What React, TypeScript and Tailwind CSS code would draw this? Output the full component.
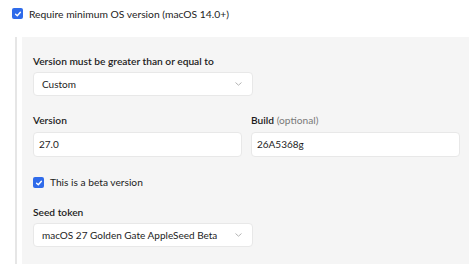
import React from "react";

function Check() {
  return (
    <div className="w-[11px] h-[11px] rounded-[2px] bg-[#2f6bea] flex items-center justify-center shrink-0">
      <svg width="8" height="8" viewBox="0 0 8 8" fill="none">
        <path d="M1.6 4.2 L3.3 5.8 L6.4 2.3" stroke="white" strokeWidth="1.4" strokeLinecap="round" strokeLinejoin="round" />
      </svg>
    </div>
  );
}

function Chevron() {
  return (
    <svg width="7" height="4" viewBox="0 0 7 4" fill="none">
      <path d="M0.8 0.8 L3.5 3.2 L6.2 0.8" stroke="#b4b4b4" strokeWidth="1" strokeLinecap="round" strokeLinejoin="round" />
    </svg>
  );
}

function Select({ value }: { value: string }) {
  return (
    <div className="w-[220px] h-[24px] bg-white border border-[#e8e8e8] rounded-[4px] flex items-center justify-between pl-[8px] pr-[10px] text-[10px] whitespace-nowrap">
      <span>{value}</span>
      <Chevron />
    </div>
  );
}

function Input({ value }: { value: string }) {
  return (
    <div className="flex-1 h-[25px] bg-white border border-[#e8e8e8] rounded-[4px] flex items-center pl-[5px] text-[10px]">
      {value}
    </div>
  );
}

export default function App() {
  return (
    <div className="w-[469px] h-[276px] bg-white overflow-hidden text-[#1c1c1c] font-['Lato',sans-serif]">
      <div className="flex items-center gap-[6px] pl-[12px] h-[27px]">
        <Check />
        <span className="text-[10.3px] leading-[14px]">Require minimum OS version (macOS 14.0+)</span>
      </div>
      <div className="mt-[10px] ml-[15px] flex">
        <div className="w-[2px] bg-[#e6e6e6]" />
        <div className="ml-[5px] flex-1 bg-[#f5f5f5] pl-[11px] pr-[9px] pt-[16px] pb-[17px]">
          <div className="text-[10.2px] font-semibold leading-[16px]">Version must be greater than or equal to</div>
          <div className="mt-[3px]">
            <Select value="Custom" />
          </div>
          <div className="mt-[16px] flex gap-[9px]">
            <div className="flex-1 flex flex-col">
              <div className="text-[10.2px] font-semibold leading-[16px]">Version</div>
              <div className="mt-[4px] flex">
                <Input value="27.0" />
              </div>
            </div>
            <div className="flex-1 flex flex-col">
              <div className="text-[10.2px] leading-[16px]">
                <span className="font-semibold">Build</span>{" "}
                <span className="text-[#7a7a7a]">(optional)</span>
              </div>
              <div className="mt-[4px] flex">
                <Input value="26A5368g" />
              </div>
            </div>
          </div>
          <div className="mt-[20px] flex items-center gap-[6px]">
            <Check />
            <span className="text-[10.2px] leading-[11px]">This is a beta version</span>
          </div>
          <div className="mt-[16px] text-[10.2px] font-semibold leading-[16px]">Seed token</div>
          <div className="mt-[3px]">
            <Select value="macOS 27 Golden Gate AppleSeed Beta" />
          </div>
        </div>
      </div>
    </div>
  );
}
